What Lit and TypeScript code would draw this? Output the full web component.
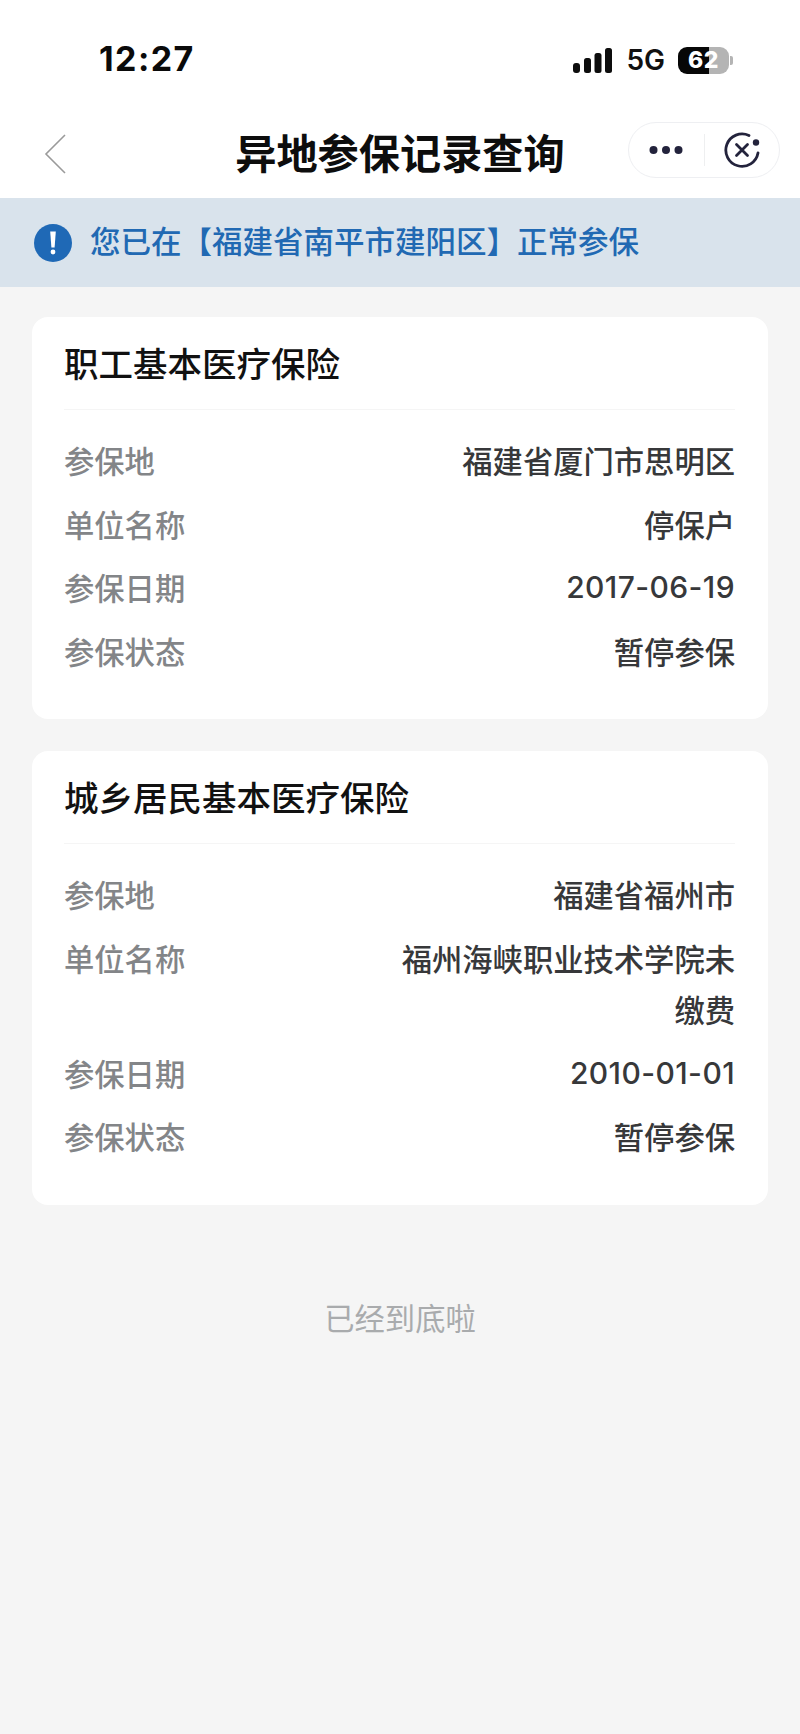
import { LitElement, html, css, svg } from "lit";
import { customElement } from "lit/decorators.js";

interface Row { k: string; v: string; }
interface Card { title: string; rows: Row[]; }

const CARDS: Card[] = [
  {
    title: "职工基本医疗保险",
    rows: [
      { k: "参保地", v: "福建省厦门市思明区" },
      { k: "单位名称", v: "停保户" },
      { k: "参保日期", v: "2017-06-19" },
      { k: "参保状态", v: "暂停参保" },
    ],
  },
  {
    title: "城乡居民基本医疗保险",
    rows: [
      { k: "参保地", v: "福建省福州市" },
      { k: "单位名称", v: "福州海峡职业技术学院未缴费" },
      { k: "参保日期", v: "2010-01-01" },
      { k: "参保状态", v: "暂停参保" },
    ],
  },
];

@customElement("app-root")
export class AppRoot extends LitElement {
  static styles = css`
    :host {
      display: block;
      width: 800px;
      height: 1734px;
      background: #f5f5f5;
      font-family: "Noto Sans CJK SC", "Noto Sans", sans-serif;
      overflow: hidden;
    }
    .top { background: #fff; height: 198px; display: flex; flex-direction: column; }
    .status {
      height: 110px;
      padding: 42px 67px 0 99px;
      box-sizing: border-box;
      display: flex;
      justify-content: space-between;
      align-items: flex-start;
    }
    .time {
      font-family: "Inter", "Liberation Sans", sans-serif;
      font-weight: 700;
      font-size: 34px;
      line-height: 34px;
      letter-spacing: 1.4px;
      color: #0a0a0a;
    }
    .sys { display: flex; align-items: center; height: 34px; margin-top: 1px; }
    .sys svg { margin-right: 14px; }
    .net {
      font-family: "Inter", "Liberation Sans", sans-serif;
      font-weight: 600;
      font-size: 28px;
      line-height: 30px;
      color: #111;
      margin-right: 13px;
    }
    .batt { display: flex; align-items: center; gap: 1px; }
    .cell {
      width: 51px;
      height: 27px;
      border-radius: 9px;
      background: linear-gradient(90deg, #070707 0, #070707 61%, #b4b4b4 61%, #b4b4b4 100%);
      color: #fff;
      font-family: "Inter", "Liberation Sans", sans-serif;
      font-weight: 800;
      font-size: 23px;
      line-height: 27px;
      letter-spacing: 0.5px;
      text-align: center;
    }
    .nub { width: 3px; height: 9px; background: #b4b4b4; border-radius: 0 2px 2px 0; }
    .nav {
      flex: 1;
      display: grid;
      grid-template-columns: 1fr auto 1fr;
      align-items: center;
      padding: 0 20px;
    }
    .back { display: block; margin-left: 24px; }
    .title {
      font-size: 41.2px;
      font-weight: 700;
      line-height: 56px;
      color: #0d0d0d;
      white-space: nowrap;
      margin-top: -6px;
    }
    .caps {
      justify-self: end;
      width: 152px;
      height: 56px;
      box-sizing: border-box;
      border: 1px solid #eeeff2;
      border-radius: 28px;
      display: flex;
      align-items: center;
      margin-top: -8px;
    }
    .caps > div { flex: 1; display: flex; justify-content: center; align-items: center; }
    .caps .sep { flex: none; width: 1px; height: 32px; background: #eeeff0; }
    .notice {
      height: 89px;
      background: #d9e3ec;
      display: flex;
      align-items: center;
      gap: 18px;
      padding: 0 0 0 34px;
      color: #2169b3;
      font-size: 30.5px;
      font-weight: 500;
      line-height: 40px;
      white-space: nowrap;
    }
    .notice span { margin-top: -6px; }
    .bang { flex: none; display: block; }
    .list { padding: 30px 32px 0; display: flex; flex-direction: column; gap: 32px; }
    .card { background: #fff; border-radius: 16px; padding: 0 33px 0 32px; }
    .card-title {
      height: 93px;
      box-sizing: border-box;
      padding-bottom: 2px;
      display: flex;
      align-items: center;
      font-size: 34.5px;
      font-weight: 500;
      color: #111;
      border-bottom: 1px solid #f5f5f5;
      white-space: nowrap;
    }
    .rows { padding: 19px 0 36px; display: flex; flex-direction: column; }
    .row { display: flex; justify-content: space-between; align-items: flex-start; gap: 40px; padding: 6px 0; }
    .k, .v { font-size: 30.3px; line-height: 51.5px; font-weight: 500; }
    .k { color: #838588; white-space: nowrap; }
    .v { color: #37383a; text-align: right; max-width: 340px; overflow-wrap: anywhere; }
    .v.num {
      font-family: "Inter", "Liberation Sans", sans-serif;
      font-size: 30px;
      letter-spacing: 0.4px;
    }
    .end {
      margin-top: 92px;
      text-align: center;
      font-size: 30.3px;
      line-height: 40px;
      color: #a9abad;
    }
  `;

  private signal() {
    return svg`<svg width="39" height="25" viewBox="0 0 39 25" fill="#0d0d0d" aria-hidden="true">
      <rect x="0" y="15" width="7" height="10" rx="3"/>
      <rect x="11" y="10" width="7" height="15" rx="2.5"/>
      <rect x="21.5" y="5" width="7" height="20" rx="2.5"/>
      <rect x="32" y="0" width="7" height="25" rx="2.5"/>
    </svg>`;
  }

  private renderCard(c: Card) {
    return html`<section class="card">
      <div class="card-title">${c.title}</div>
      <div class="rows">
        ${c.rows.map((r) => {
          const num = /^[0-9-]+$/.test(r.v);
          return html`<div class="row">
            <span class="k">${r.k}</span>
            <span class="v ${num ? "num" : ""}">${r.v}</span>
          </div>`;
        })}
      </div>
    </section>`;
  }

  render() {
    return html`
      <div class="top">
        <div class="status">
          <span class="time">12:27</span>
          <div class="sys">
            ${this.signal()}
            <span class="net">5G</span>
            <div class="batt"><div class="cell">62</div><div class="nub"></div></div>
          </div>
        </div>
        <div class="nav">
          <svg class="back" width="22" height="40" viewBox="0 0 22 40" fill="none" stroke="#9a9a9a" stroke-width="1.6" aria-hidden="true">
            <path d="M21 1 2 20l19 19"/>
          </svg>
          <div class="title">异地参保记录查询</div>
          <div class="caps">
            <div>
              <svg width="34" height="10" viewBox="0 0 34 10" fill="#23233c" aria-hidden="true">
                <circle cx="4.5" cy="5" r="4"/><circle cx="17" cy="5" r="4"/><circle cx="29.5" cy="5" r="4"/>
              </svg>
            </div>
            <div class="sep"></div>
            <div>
              <svg width="38" height="38" viewBox="0 0 38 38" fill="none" stroke="#23233c" stroke-width="2.8" stroke-linecap="round" aria-hidden="true">
                <path d="M26 4.5A16.2 16.2 0 1 0 35 22"/>
                <path d="M13.5 13.5 24.5 24.5M24.5 13.5 13.5 24.5"/>
                <circle cx="33" cy="11.5" r="3.2" fill="#23233c" stroke="none"/>
              </svg>
            </div>
          </div>
        </div>
      </div>
      <div class="notice">
        <svg class="bang" width="38" height="38" viewBox="0 0 38 38" aria-hidden="true">
          <circle cx="19" cy="19" r="19" fill="#1f69b6"/>
          <path d="M16.2 7.5h5.6l-1.2 16h-3.2z" fill="#fff"/>
          <circle cx="19" cy="28" r="2.4" fill="#fff"/>
        </svg>
        <span>您已在【福建省南平市建阳区】正常参保</span>
      </div>
      <div class="list">${CARDS.map((c) => this.renderCard(c))}</div>
      <div class="end">已经到底啦</div>
    `;
  }
}
